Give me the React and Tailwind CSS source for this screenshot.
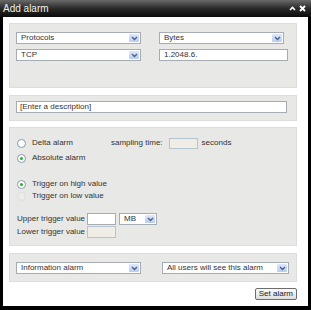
import React from 'react';

const Chevron = () => (
    <svg width="7" height="5" viewBox="0 0 7 5">
        <path d="M1 1 L3.5 3.5 L6 1" fill="none" stroke="#4d6185" strokeWidth="1.4" />
    </svg>
);

const Select = ({ label, w }) => (
    <div className={`${w} h-[12px] border border-[#a5acb2] bg-white flex items-center justify-between pl-[4px] pr-[1px]`}>
        <span className="leading-none">{label}</span>
        <div className="w-[10px] h-[8px] bg-gradient-to-b from-[#dfe8fb] to-[#b9ccf2] flex items-center justify-center rounded-[1px]">
            <Chevron />
        </div>
    </div>
);

const Radio = ({ checked, disabled, label }) => (
    <div className="flex items-center gap-[6px]">
        <div
            className={`w-[9px] h-[9px] rounded-full border flex items-center justify-center ${
                disabled ? 'border-[#dcdcdc] bg-[#ececea]' : 'border-[#8a9aa8] bg-white'
            }`}
        >
            {checked && <div className="w-[3px] h-[3px] rounded-full bg-[#2fa82f]" />}
        </div>
        <span>{label}</span>
    </div>
);

export default function App() {
    return (
        <div className="w-[311px] h-[310px] bg-black flex flex-col font-['Liberation_Sans',sans-serif] text-[8px] text-[#333]">
            {/* title bar */}
            <div className="h-[17px] bg-gradient-to-b from-[#6a6a6a] via-[#2a2a2a] to-[#0c0c0c] flex items-center justify-between pl-[3px] pr-[5px]">
                <span className="text-[#f2f2f2] text-[10px] leading-none">Add alarm</span>
                <div className="flex items-center gap-[3px]">
                    <svg width="7" height="5" viewBox="0 0 7 5">
                        <path d="M1 4 L3.5 1.5 L6 4" fill="none" stroke="#fff" strokeWidth="1.6" />
                    </svg>
                    <svg width="7" height="7" viewBox="0 0 7 7">
                        <path d="M1 1 L6 6 M6 1 L1 6" fill="none" stroke="#fff" strokeWidth="1.8" />
                    </svg>
                </div>
            </div>

            <div className="flex-1 ml-[3px] mr-[3px] mb-[4px] bg-white pl-[6px] pr-[11px] pt-[6px] flex flex-col">
                {/* query panel */}
                <div className="h-[65px] bg-[#e8e8e6] border border-[#dddddb] pl-[6px] pt-[8px] flex flex-col gap-[5px]">
                    <div className="flex gap-[18px]">
                        <Select label="Protocols" w="w-[125px]" />
                        <Select label="Bytes" w="w-[125px]" />
                    </div>
                    <div className="flex gap-[18px]">
                        <Select label="TCP" w="w-[125px]" />
                        <div className="w-[129px] h-[12px] border border-[#a5acb2] bg-white flex items-center pl-[4px]">1.2048.6.</div>
                    </div>
                </div>

                {/* description */}
                <div className="mt-[7px] h-[26px] bg-[#e8e8e6] border border-[#dddddb] pl-[6px] pt-[5px]">
                    <div className="w-[271px] h-[12px] border border-[#a5acb2] bg-white flex items-center pl-[3px]">[Enter a description]</div>
                </div>

                {/* alarm type */}
                <div className="mt-[6px] h-[119px] bg-[#e8e8e6] border border-[#dddddb] pl-[7px] pt-[10px] flex flex-col">
                    <div className="h-[10px] flex items-center">
                        <div className="w-[94px]">
                            <Radio label="Delta alarm" />
                        </div>
                        <span>sampling time:</span>
                        <div className="ml-[6px] w-[29px] h-[11px] border border-[#b7c3cf] bg-[#efede6]" />
                        <span className="ml-[4px]">seconds</span>
                    </div>
                    <div className="mt-[5px] h-[10px] flex items-center">
                        <Radio checked label="Absolute alarm" />
                    </div>

                    <div className="mt-[16px] h-[10px] flex items-center">
                        <Radio checked label="Trigger on high value" />
                    </div>
                    <div className="mt-[2px] h-[10px] flex items-center">
                        <Radio disabled label="Trigger on low value" />
                    </div>

                    <div className="mt-[12px] h-[12px] flex items-center">
                        <span className="w-[70px]">Upper trigger value</span>
                        <div className="w-[29px] h-[12px] border border-[#a5acb2] bg-white" />
                        <div className="ml-[3px]">
                            <Select label="MB" w="w-[38px]" />
                        </div>
                    </div>
                    <div className="mt-[1px] h-[12px] flex items-center">
                        <span className="w-[70px]">Lower trigger value</span>
                        <div className="w-[29px] h-[12px] border border-[#b7c3cf] bg-[#efede6]" />
                    </div>
                </div>

                {/* alarm level */}
                <div className="mt-[7px] h-[29px] bg-[#e8e8e6] border border-[#dddddb] pl-[6px] pt-[8px] flex gap-[21px]">
                    <Select label="Information alarm" w="w-[125px]" />
                    <Select label="All users will see this alarm" w="w-[127px]" />
                </div>

                <div className="mt-[6px] flex justify-end">
                    <button className="h-[12px] px-[3px] border border-[#6d6d6d] rounded-[2px] bg-gradient-to-b from-[#fafafa] to-[#dedede] text-[#222] leading-none">
                        Set alarm
                    </button>
                </div>
            </div>
        </div>
    );
}
